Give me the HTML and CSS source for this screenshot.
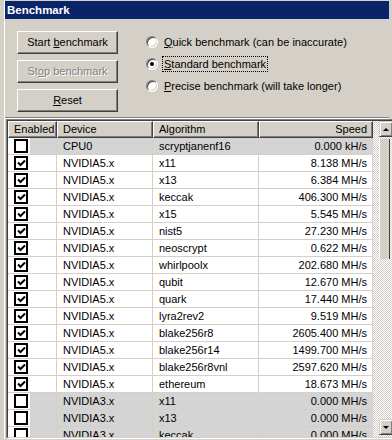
FILE: index.html
```html
<!DOCTYPE html>
<html lang="en">
<head>
  <meta charset="UTF-8">
  <title>Benchmark</title>
  <link rel="stylesheet" href="styles.css">
</head>
<body>
<div class="window">
  <div class="caption">Benchmark</div>

  <div class="top">
    <div class="buttons">
      <div class="button">Start <u>b</u>enchmark</div>
      <div class="button disabled">St<u>o</u>p benchmark</div>
      <div class="button"><u>R</u>eset</div>
    </div>
    <div class="radios">
      <div class="radio-row"><span class="radio"></span><span class="label"><u>Q</u>uick benchmark (can be inaccurate)</span></div>
      <div class="radio-row"><span class="radio checked"></span><span class="label focus"><u>S</u>tandard benchmark</span></div>
      <div class="radio-row"><span class="radio"></span><span class="label"><u>P</u>recise benchmark (will take longer)</span></div>
    </div>
  </div>

  <div class="separator"></div>

  <div class="list">
    <div class="list-inner">
      <div class="grid">
        <div class="row head">
          <div class="hcell">Enabled</div>
          <div class="hcell">Device</div>
          <div class="hcell">Algorithm</div>
          <div class="hcell right">Speed</div>
        </div>
        <div id="rows"></div>
      </div>
      <div class="scrollbar">
        <div class="arrow up"><span></span></div>
        <div class="thumb"></div>
        <div class="arrow down"><span></span></div>
      </div>
    </div>
  </div>
</div>

<script>
  const items = [
    ['CPU0', 'scryptjanenf16', '0.000 kH/s', false],
    ['NVIDIA5.x', 'x11', '8.138 MH/s', true],
    ['NVIDIA5.x', 'x13', '6.384 MH/s', true],
    ['NVIDIA5.x', 'keccak', '406.300 MH/s', true],
    ['NVIDIA5.x', 'x15', '5.545 MH/s', true],
    ['NVIDIA5.x', 'nist5', '27.230 MH/s', true],
    ['NVIDIA5.x', 'neoscrypt', '0.622 MH/s', true],
    ['NVIDIA5.x', 'whirlpoolx', '202.680 MH/s', true],
    ['NVIDIA5.x', 'qubit', '12.670 MH/s', true],
    ['NVIDIA5.x', 'quark', '17.440 MH/s', true],
    ['NVIDIA5.x', 'lyra2rev2', '9.519 MH/s', true],
    ['NVIDIA5.x', 'blake256r8', '2605.400 MH/s', true],
    ['NVIDIA5.x', 'blake256r14', '1499.700 MH/s', true],
    ['NVIDIA5.x', 'blake256r8vnl', '2597.620 MH/s', true],
    ['NVIDIA5.x', 'ethereum', '18.673 MH/s', true],
    ['NVIDIA3.x', 'x11', '0.000 MH/s', false],
    ['NVIDIA3.x', 'x13', '0.000 MH/s', false],
    ['NVIDIA3.x', 'keccak', '0.000 MH/s', false]
  ];

  const tick = '<svg width="9" height="9" viewBox="0 0 9 9"><path d="M1 3.5 L3.5 6 L8 1.5" fill="none" stroke="#000" stroke-width="2"/></svg>';

  document.getElementById('rows').innerHTML = items.map(item => `
    <div class="row${item[3] ? '' : ' off'}">
      <div class="cell check"><span class="box">${item[3] ? tick : ''}</span></div>
      <div class="cell">${item[0]}</div>
      <div class="cell">${item[1]}</div>
      <div class="cell right">${item[2]}</div>
    </div>`).join('');
</script>
</body>
</html>
```

FILE: styles.css
```css
* {
  margin: 0;
  padding: 0;
  box-sizing: border-box;
}

html, body {
  width: 392px;
  height: 440px;
  overflow: hidden;
}

body {
  background-color: #d4d0c8;
  font-family: "Liberation Sans", Arial, sans-serif;
  font-size: 11px;
  color: #000;
}

u {
  text-decoration: underline;
  text-underline-offset: 1px;
}

.window {
  padding-top: 1px;
  border-left: 1px solid #ffffff;
  margin-left: 4px;
}

.caption {
  height: 18px;
  width: 384px;
  padding-left: 2px;
  line-height: 18px;
  background-color: #0a246a;
  color: #fff;
  font-weight: bold;
  font-size: 11.5px;
}

.top {
  display: flex;
  height: 98px;
  padding: 12px 0 0 12px;
}

.buttons {
  display: flex;
  flex-direction: column;
  gap: 6px;
  width: 101px;
}

.button {
  height: 23px;
  line-height: 21px;
  text-align: center;
  border: 1px solid;
  border-color: #fff #404040 #404040 #fff;
  box-shadow: inset -1px -1px #808080;
}

.button.disabled {
  color: #808080;
  text-shadow: 1px 1px #fff;
}

.radios {
  display: flex;
  flex-direction: column;
  margin-left: 28px;
}

.radio-row {
  display: flex;
  align-items: center;
  height: 22px;
}

.radio {
  position: relative;
  width: 12px;
  height: 12px;
  margin-right: 4px;
  border: 1px solid;
  border-color: #808080 #fff #fff #808080;
  border-radius: 50%;
  background-color: #fff;
  box-shadow: inset 1px 1px #404040, inset -1px -1px #d4d0c8;
}

.radio.checked::after {
  content: "";
  position: absolute;
  left: 3px;
  top: 3px;
  width: 4px;
  height: 4px;
  border-radius: 50%;
  background-color: #000;
}

.label {
  padding: 1px 1px;
  border: 1px solid transparent;
}

.label.focus {
  border: 1px dotted #000;
}

.separator {
  width: 384px;
  border-top: 1px solid #808080;
  border-bottom: 1px solid #fff;
}

.list {
  width: 400px;
  height: 320px;
  margin-left: 1px;
  border: 1px solid;
  border-color: #808080 #fff #fff #808080;
}

.list-inner {
  display: flex;
  height: 100%;
  border: 1px solid;
  border-color: #404040 #d4d0c8 #d4d0c8 #404040;
  overflow: hidden;
}

.grid {
  flex: none;
  width: 365px;
  background-color: #fff;
}

.row {
  display: grid;
  grid-template-columns: 49px 96px 106px 114px;
  height: 17px;
}

.hcell {
  line-height: 15px;
  padding-left: 5px;
  background-color: #d4d0c8;
  border: 1px solid;
  border-color: #fff #404040 #404040 #fff;
  box-shadow: inset -1px -1px #808080;
}

.hcell.right,
.cell.right {
  text-align: right;
  padding-right: 5px;
}

.cell {
  line-height: 16px;
  padding-left: 6px;
  border-right: 1px solid #d4d0c8;
  border-bottom: 1px solid #d4d0c8;
  white-space: nowrap;
}

.row.off .cell {
  background-color: #d4d4d4;
}

.row.off .cell.check {
  background: linear-gradient(to right, #fff 22px, #d4d4d4 22px);
}

.cell.check {
  display: flex;
  align-items: center;
  padding-left: 6px;
}

.box {
  display: flex;
  align-items: center;
  justify-content: center;
  width: 14px;
  height: 14px;
  border: 2px solid #000;
  background-color: #fff;
}

.scrollbar {
  flex: none;
  display: flex;
  flex-direction: column;
  width: 19px;
  background: repeating-conic-gradient(#fff 0 25%, #d4d0c8 0 50%) 0 0 / 2px 2px;
}

.arrow {
  display: flex;
  align-items: center;
  justify-content: center;
  width: 14px;
  height: 16px;
  margin-left: 6px;
  background-color: #d4d0c8;
  border: 1px solid;
  border-color: #d4d0c8 #404040 #404040 #d4d0c8;
  box-shadow: inset 1px 1px #fff, inset -1px -1px #808080;
}

.arrow span {
  width: 0;
  height: 0;
  border-left: 3px solid transparent;
  border-right: 3px solid transparent;
}

.arrow.up span {
  border-bottom: 3px solid #000;
}

.arrow.down {
  margin-top: auto;
  margin-bottom: 2px;
}

.arrow.down span {
  border-top: 3px solid #000;
}

.thumb {
  width: 11px;
  height: 120px;
  margin: 2px 0 0 6px;
  background-color: #d4d0c8;
  border-left: 1px solid #fff;
  border-right: 1px solid #404040;
}
```
